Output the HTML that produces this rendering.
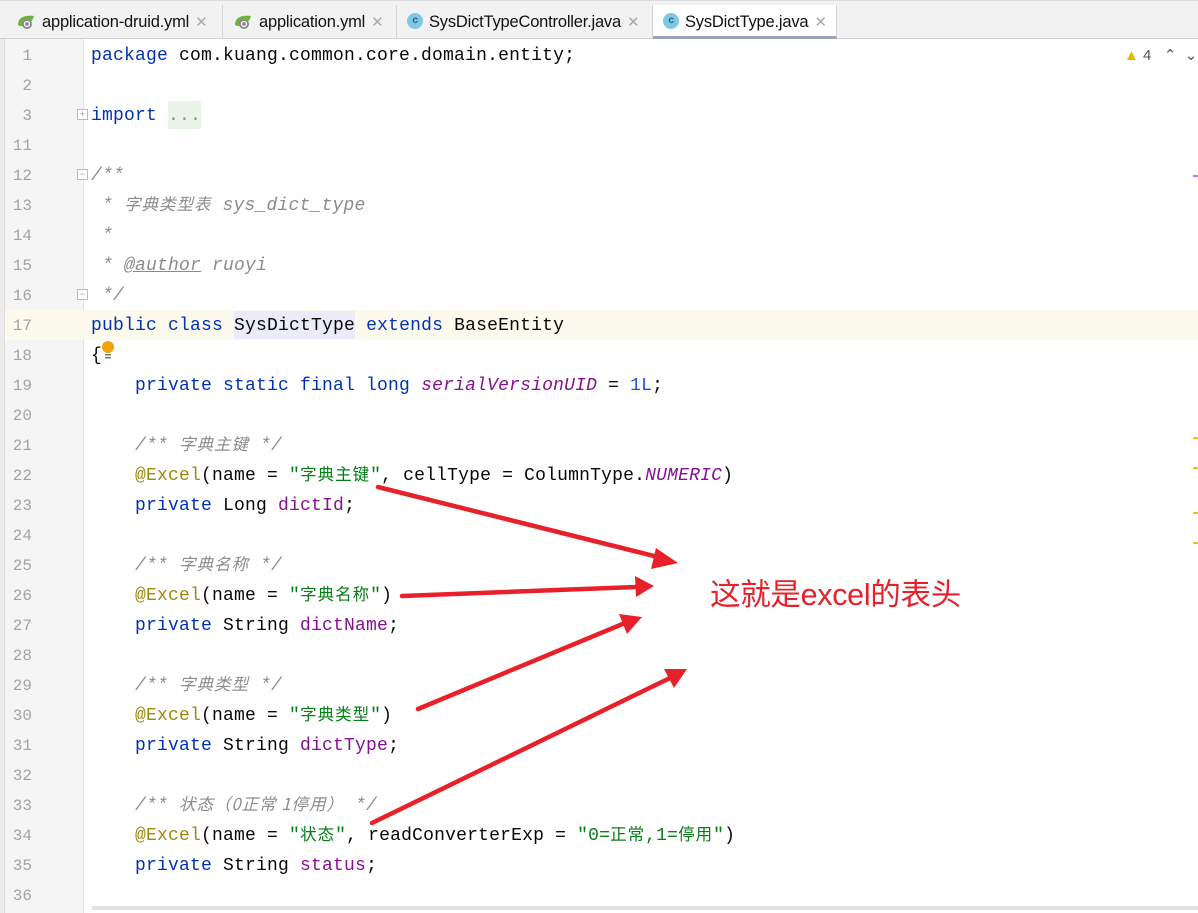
<!DOCTYPE html>
<html><head><meta charset="utf-8"><style>
*{margin:0;padding:0;box-sizing:border-box}
body{width:1198px;height:913px;overflow:hidden;background:#fff;position:relative;font-family:"Liberation Mono","Noto Sans CJK SC",monospace}
.tabs{position:absolute;left:0;top:0;width:1198px;height:39px;background:#f2f2f2;border-top:1px solid #ddd;border-bottom:1px solid #d0d0d0}
.tab{position:absolute;top:4px;height:34px;border-right:1px solid #d4d4d4;font:16.5px "Liberation Sans","Noto Sans CJK SC",sans-serif;color:#111;line-height:34px;white-space:nowrap;letter-spacing:-0.2px}
.tab .x{color:#aaa;margin-left:6px;font-size:15px}
.tab.act{background:#fff;border-bottom:3px solid #9aa4b5}
.ico{display:inline-block;vertical-align:middle;margin-right:6px;position:relative;top:-2px}
.c{width:16px;height:16px;border-radius:50%;background:#7ec8e3;color:#2a5a78;font:bold 10px "Liberation Sans",sans-serif;text-align:center;line-height:16px}
.gut{position:absolute;left:0;top:39px;width:84px;height:874px;background:#f5f5f5;border-right:1px solid #e3e3e3}
.strip{position:absolute;left:0;top:39px;width:5px;height:874px;background:#ebebeb;border-right:1px solid #ddd}
.hl{position:absolute;left:5px;top:310px;width:1193px;height:30px;background:#fcfaed}
.ln{position:absolute;left:5px;width:27px;text-align:right;color:#a3a3a3;font-size:16px;line-height:30px;height:30px;margin-top:1px}
.code{position:absolute;left:91px;white-space:pre;font-size:18px;letter-spacing:0.2px;line-height:30px;height:30px;color:#080808;margin-top:1px}
.k{color:#0033b3}.a{color:#9e880d}.s{color:#067d17}.cm{color:#8c8c8c;font-style:italic}.f{color:#871094}.fi{color:#871094;font-style:italic}.n{color:#1750eb}
.cj{font-family:"Noto Sans CJK SC",sans-serif;font-size:16.5px;letter-spacing:1px;line-height:1}
.mk{position:absolute;left:1193px;width:5px;height:2px;background:#e6c800}
</style></head><body>
<div class="tabs">
 <div class="tab" style="left:0;width:223px;padding-left:16px"><svg class="ico" width="20" height="16" viewBox="0 0 20 16"><path d="M2 12 C2 4 9 2 18 3 C16 10 11 13 4 13Z" fill="#6db33f"/><circle cx="11" cy="11" r="5" fill="#8a8a8a"/><circle cx="11" cy="11" r="2.5" fill="none" stroke="#fff" stroke-width="1.2"/></svg>application-druid.yml<span class="x">✕</span></div>
 <div class="tab" style="left:223px;width:174px;padding-left:10px"><svg class="ico" width="20" height="16" viewBox="0 0 20 16"><path d="M2 12 C2 4 9 2 18 3 C16 10 11 13 4 13Z" fill="#6db33f"/><circle cx="11" cy="11" r="5" fill="#8a8a8a"/><circle cx="11" cy="11" r="2.5" fill="none" stroke="#fff" stroke-width="1.2"/></svg>application.yml<span class="x">✕</span></div>
 <div class="tab" style="left:397px;width:256px;padding-left:10px"><span class="ico c">c</span>SysDictTypeController.java<span class="x">✕</span></div>
 <div class="tab act" style="left:653px;width:184px;padding-left:10px"><span class="ico c">c</span>SysDictType.java<span class="x">✕</span></div>
</div>
<div class="gut"></div><div class="strip"></div>
<div class="hl"></div>
<div style="position:absolute;left:92px;top:906px;width:1106px;height:4px;background:#e2e2e2"></div>
<div style="position:absolute;left:1124px;top:46px;font:15px 'Liberation Sans',sans-serif;color:#555"><span style="color:#e6b800">▲</span> 4 &nbsp;&nbsp;⌃ &nbsp;⌄</div>
<div style="position:absolute;left:1193px;top:175px;width:5px;height:2px;background:#b07ee0"></div>
<div class="mk" style="top:437px"></div><div class="mk" style="top:467px"></div><div class="mk" style="top:512px"></div><div class="mk" style="top:542px"></div>
<div style="position:absolute;left:168px;top:101px;width:33px;height:28px;background:#e9f5e6"></div>
<div style="position:absolute;left:234px;top:311px;width:121px;height:28px;background:#ecebfa"></div>
<div style="position:absolute;left:77px;top:109px;width:11px;height:11px;border:1px solid #bbb;background:#fff;font:9px sans-serif;color:#999;text-align:center;line-height:9px">+</div>
<div style="position:absolute;left:77px;top:169px;width:11px;height:11px;border:1px solid #bbb;background:#fff;font:9px sans-serif;color:#999;text-align:center;line-height:9px">−</div>
<div style="position:absolute;left:77px;top:289px;width:11px;height:11px;border:1px solid #bbb;background:#fff;font:9px sans-serif;color:#999;text-align:center;line-height:9px">−</div>
<svg style="position:absolute;left:100px;top:340px" width="16" height="20"><circle cx="8" cy="7" r="6" fill="#f0a30a"/><rect x="5" y="14" width="6" height="1.5" fill="#777"/><rect x="5" y="17" width="6" height="1.5" fill="#777"/></svg>

<div class="ln" style="top:40px">1</div><div class="code" style="top:40px"><span class="k">package</span> com.kuang.common.core.domain.entity;</div>
<div class="ln" style="top:70px">2</div>
<div class="ln" style="top:100px">3</div><div class="code" style="top:100px"><span class="k">import</span> <span class="cm" style="font-style:normal">...</span></div>
<div class="ln" style="top:130px">11</div>
<div class="ln" style="top:160px">12</div><div class="code cm" style="top:160px">/**</div>
<div class="ln" style="top:190px">13</div><div class="code cm" style="top:190px"> * <span class="cj">字典类型表</span> sys_dict_type</div>
<div class="ln" style="top:220px">14</div><div class="code cm" style="top:220px"> *</div>
<div class="ln" style="top:250px">15</div><div class="code cm" style="top:250px"> * <u>@author</u> ruoyi</div>
<div class="ln" style="top:280px">16</div><div class="code cm" style="top:280px"> */</div>
<div class="ln" style="top:310px">17</div><div class="code" style="top:310px"><span class="k">public class</span> SysDictType <span class="k">extends</span> BaseEntity</div>
<div class="ln" style="top:340px">18</div><div class="code" style="top:340px">{</div>
<div class="ln" style="top:370px">19</div><div class="code" style="top:370px">    <span class="k">private static final long</span> <span class="fi">serialVersionUID</span> = <span class="n">1L</span>;</div>
<div class="ln" style="top:400px">20</div>
<div class="ln" style="top:430px">21</div><div class="code cm" style="top:430px">    /** <span class="cj">字典主键</span> */</div>
<div class="ln" style="top:460px">22</div><div class="code" style="top:460px">    <span class="a">@Excel</span>(name = <span class="s">"<span class="cj">字典主键</span>"</span>, cellType = ColumnType.<span class="fi">NUMERIC</span>)</div>
<div class="ln" style="top:490px">23</div><div class="code" style="top:490px">    <span class="k">private</span> Long <span class="f">dictId</span>;</div>
<div class="ln" style="top:520px">24</div>
<div class="ln" style="top:550px">25</div><div class="code cm" style="top:550px">    /** <span class="cj">字典名称</span> */</div>
<div class="ln" style="top:580px">26</div><div class="code" style="top:580px">    <span class="a">@Excel</span>(name = <span class="s">"<span class="cj">字典名称</span>"</span>)</div>
<div class="ln" style="top:610px">27</div><div class="code" style="top:610px">    <span class="k">private</span> String <span class="f">dictName</span>;</div>
<div class="ln" style="top:640px">28</div>
<div class="ln" style="top:670px">29</div><div class="code cm" style="top:670px">    /** <span class="cj">字典类型</span> */</div>
<div class="ln" style="top:700px">30</div><div class="code" style="top:700px">    <span class="a">@Excel</span>(name = <span class="s">"<span class="cj">字典类型</span>"</span>)</div>
<div class="ln" style="top:730px">31</div><div class="code" style="top:730px">    <span class="k">private</span> String <span class="f">dictType</span>;</div>
<div class="ln" style="top:760px">32</div>
<div class="ln" style="top:790px">33</div><div class="code cm" style="top:790px">    /** <span class="cj">状态（0正常 1停用）</span> */</div>
<div class="ln" style="top:820px">34</div><div class="code" style="top:820px">    <span class="a">@Excel</span>(name = <span class="s">"<span class="cj">状态</span>"</span>, readConverterExp = <span class="s">"0=<span class="cj">正常</span>,1=<span class="cj">停用</span>"</span>)</div>
<div class="ln" style="top:850px">35</div><div class="code" style="top:850px">    <span class="k">private</span> String <span class="f">status</span>;</div>
<div class="ln" style="top:880px">36</div>

<svg style="position:absolute;left:0;top:0" width="1198" height="913">
<g stroke="#e8202a" stroke-width="4.5" stroke-linecap="round" fill="#e8202a">
<line x1="378" y1="487" x2="662" y2="558"/>
<line x1="402" y1="596" x2="636" y2="587"/>
<line x1="418" y1="709" x2="625" y2="623"/>
<line x1="372" y1="823" x2="670" y2="678"/>
</g>
<g fill="#e8202a">
<polygon points="678,563 656,548 651,569"/>
<polygon points="654,586 635,576 636,597"/>
<polygon points="642,617 619,614 627,634"/>
<polygon points="687,669 664,669 674,688"/>
</g>
</svg>
<div style="position:absolute;left:710px;top:570px;font:30.5px 'Liberation Sans','Noto Sans CJK SC',sans-serif;color:#e8202a;white-space:nowrap;letter-spacing:-0.3px">这就是excel的表头</div>
</body></html>
